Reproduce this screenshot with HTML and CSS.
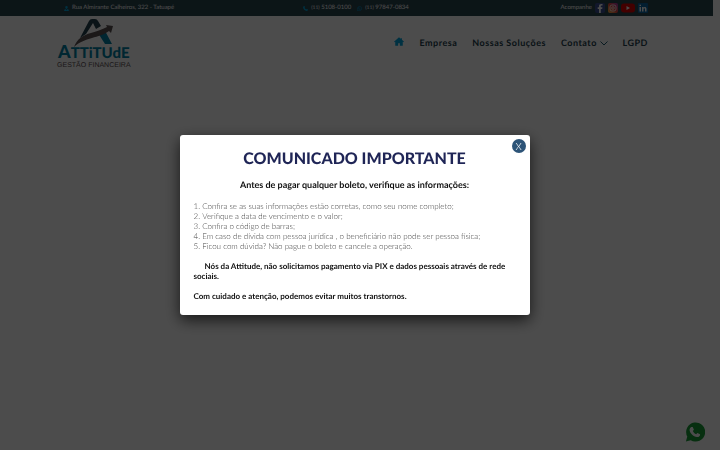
FILE: index.html
```html
<!DOCTYPE html>
<html lang="pt-br">
<head>
<meta charset="utf-8">
<meta name="viewport" content="width=device-width,initial-scale=1.0">
<title>Attitude Gestão Financeira</title>
<link rel="stylesheet" href="styles.css">
</head>
<body>

<header>
  <div class="topbar">
    <div class="container topbar-row">
      <span class="topbar-item">
        <svg class="ico" viewBox="0 0 12 12"><path fill="#00a4dc" d="M6 0a3 3 0 0 1 3 3c0 2-3 5-3 5S3 5 3 3a3 3 0 0 1 3-3zM2 7h1.500L6 10l2.500-3H10l2 5H0z"/></svg>
        Rua Almirante Calheiros, 322 - Tatuapé
      </span>
      <span class="topbar-item">
        <svg class="ico" viewBox="0 0 12 12"><path fill="#00a4dc" d="M1 1l2.500-1L5 3 3.500 4.300a8 8 0 0 0 4 4L9 7l3 1.500-1 2.500c-.3.700-.8 1-1.500 1C4 11.500.5 8 0 2.500 0 1.800.3 1.300 1 1z"/></svg>
        <a href="#"><small>(11)</small> 5108-0100</a>
        <svg class="ico ico-wpp" viewBox="0 0 12 12"><path fill="none" stroke="#008cc0" stroke-width="1.500" d="M1 11l.8-2.500A5 5 0 1 1 3.600 10.400z"/><path fill="#008cc0" d="M4 3l1 0 .6 1.400-.6.700 1.800 1.800.8-.6L9 7c0 1-1 1.700-2 1.500C5 8 3.500 6.500 3.200 4.600 3.200 4 3.400 3.400 4 3z"/></svg>
        <a href="#"><small>(11)</small> 97847-0834</a>
      </span>
      <span class="topbar-item social">
        Acompanhe
        <a href="#" aria-label="Facebook"><svg width="10" height="10" viewBox="0 0 10 10"><rect width="10" height="10" rx="2" fill="#3b4e90"/><path fill="#fff" d="M4 10V6H2.700V4.300H4V3c0-1.500 1-2.200 3.500-1.900v1.500C6.300 2.500 5.800 2.600 5.800 3.300v1h1.600L7.200 6H5.800v4z"/></svg></a>
        <a href="#" aria-label="Instagram"><svg width="10" height="10" viewBox="0 0 10 10"><defs><linearGradient id="insta" x1="0" y1="1" x2="1" y2="0"><stop offset="0" stop-color="#fdc04e"/><stop offset=".5" stop-color="#e8483f"/><stop offset="1" stop-color="#a83cb8"/></linearGradient></defs><rect width="10" height="10" rx="2" fill="url(#insta)"/><rect x="2" y="2" width="6" height="6" rx="2" fill="none" stroke="#fff" stroke-width=".8"/><circle cx="5" cy="5" r="1.300" fill="none" stroke="#fff" stroke-width=".8"/></svg></a>
        <a href="#" aria-label="YouTube"><svg width="14" height="10" viewBox="0 0 14 10"><rect y=".5" width="14" height="9" rx="3" fill="#e00000"/><path fill="#fff" d="M5.500 3v4L9 5z"/></svg></a>
        <a href="#" aria-label="LinkedIn"><svg width="10" height="10" viewBox="0 0 10 10"><rect width="10" height="10" rx="1" fill="#0a66a0"/><path fill="#fff" d="M1.500 4H3v4.500H1.500zM1.500 1.700H3V3H1.500zM4 4h1.400v.6C6.300 3.500 8.500 3.700 8.500 5.800v2.700H7V6.200C7 5 5.500 5 5.500 6.200v2.300H4z"/></svg></a>
      </span>
    </div>
  </div>

  <div class="container header-row">
    <a href="#" class="logo">
      <svg width="40" height="28" viewBox="0 0 40 28">
        <path fill="#24404d" d="M6 19L15 2q1-2 3-2h3q2 0 3 2l3 5-5 3-3-6-7 11z"/>
        <path fill="#007fa3" d="M24 14l6-4 8 15h-7z"/>
        <path fill="#5a5052" d="M0 28c3-8 9-12 17-14 7-2 12-4 16-6l-1-2 7 1-2 7-2-2c-5 4-11 5-17 7C11 21 5 23 0 28z"/>
      </svg>
      <span class="logo-name">ATTiTUdE</span>
      <span class="logo-sub">GESTÃO FINANCEIRA</span>
    </a>
    <nav class="menu">
      <a href="#" aria-label="Início"><svg width="10" height="9" viewBox="0 0 12 10"><path fill="#00a4dc" d="M6 0l2 1.700V1h1.500v2L12 5.200l-.7.800-.8-.6V10H7V7H5v3H1.500V5.400l-.8.600L0 5.200z"/></svg></a>
      <a href="#">Empresa</a>
      <a href="#">Nossas Soluções</a>
      <a href="#">Contato <svg width="8" height="5" viewBox="0 0 8 5"><path fill="none" stroke="#1f5a70" d="M.5.500L4 4 7.500.500"/></svg></a>
      <a href="#">LGPD</a>
    </nav>
  </div>
</header>

<a href="#" class="whatsapp" aria-label="WhatsApp">
  <svg width="20" height="20" viewBox="0 0 22 22"><path fill="#1a9e38" d="M1 21.500l1.500-5.500A10.500 10.500 0 1 1 6.300 20z"/><path fill="#fff" d="M7 5.500h1.500l1.300 3-1.200 1.500c.8 1.700 2 2.800 3.700 3.500l1.300-1.500 3 1.400c.2 2-1.600 3.400-3.400 3.200-4.200-.6-7.700-4-8.200-7.700C5 7.500 5.800 6 7 5.500z"/></svg>
</a>

<div class="overlay">
  <div class="modal" role="dialog" aria-labelledby="modal_title">
    <button class="close" type="button" aria-label="Fechar">X</button>
    <h2 id="modal_title">COMUNICADO IMPORTANTE</h2>
    <h3>Antes de pagar qualquer boleto, verifique as informações:</h3>
    <ol>
      <li>Confira se as suas informações estão corretas, como seu nome completo;</li>
      <li>Verifique a data de vencimento e o valor;</li>
      <li>Confira o código de barras;</li>
      <li>Em caso de dívida com pessoa jurídica , o beneficiário não pode ser pessoa física;</li>
      <li>Ficou com dúvida? Não pague o boleto e cancele a operação.</li>
    </ol>
    <p class="notice">Nós da Attitude, não solicitamos pagamento via PIX e dados pessoais através de rede sociais.</p>
    <p>Com cuidado e atenção, podemos evitar muitos transtornos.</p>
  </div>
</div>

</body>
</html>
```
FILE: styles.css
```css
*{
  box-sizing:border-box;
}

body{
  margin:0;
  padding-right:7px;
  min-height:100vh;
  font-family:Lato,"Liberation Sans",sans-serif;
  text-rendering:geometricPrecision;
  background:#ffffff;
}

a{
  color:inherit;
  text-decoration:none;
}

.container{
  width:84%;
  margin:0 auto;
}

.topbar{
  background:#2b464f;
  color:#ffffff;
  font-size:6px;
  line-height:16px;
}

.topbar-row{
  display:grid;
  grid-template-columns:1fr auto 1fr;
  padding:0 8px 0 7px;
}

.topbar-item{
  display:flex;
  align-items:center;
  gap:3px;
}

.topbar-item small{
  font-size:5px;
}

.ico{
  width:5px;
  height:5px;
}

.ico-wpp{
  margin-left:3px;
}

.social{
  justify-content:flex-end;
}

.social a{
  display:flex;
}

.header-row{
  display:flex;
  justify-content:space-between;
  align-items:center;
  padding-top:3px;
}

.logo{
  display:flex;
  flex-direction:column;
  align-items:center;
  color:#5a5052;
}

.logo-name{
  margin-top:-4px;
  font-size:15px;
  line-height:17px;
  font-weight:900;
  color:#007fa3;
}

.logo-name::first-letter{
  font-size:18px;
}

.logo-sub{
  font-family:"Liberation Sans",Arial,sans-serif;
  font-size:7px;
  line-height:8px;
}

.menu{
  display:flex;
  align-items:center;
  gap:15px;
  padding:0 8px 3px 0;
  font-size:9px;
  line-height:12px;
  font-weight:bold;
  letter-spacing:0.5px;
  color:#24404d;
}

.whatsapp{
  position:fixed;
  right:15px;
  bottom:4px;
}

.overlay{
  position:fixed;
  inset:0;
  display:flex;
  align-items:center;
  justify-content:center;
  padding-right:11px;
  background:rgba(0,0,0,0.7);
}

.modal{
  position:relative;
  width:350px;
  padding:14px;
  border-radius:3px;
  background:#ffffff;
  box-shadow:0 5px 15px rgba(0,0,0,0.7);
  font-size:8px;
  line-height:10px;
  color:#111111;
}

.close{
  position:absolute;
  top:4px;
  right:4px;
  width:14px;
  height:14px;
  padding:0;
  border:0;
  border-radius:50%;
  background:#2d5478;
  color:#ffffff;
  font-family:inherit;
  font-size:10px;
  line-height:14px;
  font-weight:300;
}

.modal h2{
  margin:0 0 10px;
  font-size:16px;
  line-height:20px;
  font-weight:900;
  text-align:center;
  color:#1f2556;
}

.modal h3{
  margin:0 0 10px;
  font-size:9px;
  line-height:12px;
  text-align:center;
}

.modal ol{
  margin:0 0 10px;
  padding:0;
  list-style-position:inside;
  font-weight:300;
  color:#444444;
}

.modal p{
  margin:10px 0 0;
  font-weight:bold;
}

.modal .notice{
  text-indent:11px;
}
```
